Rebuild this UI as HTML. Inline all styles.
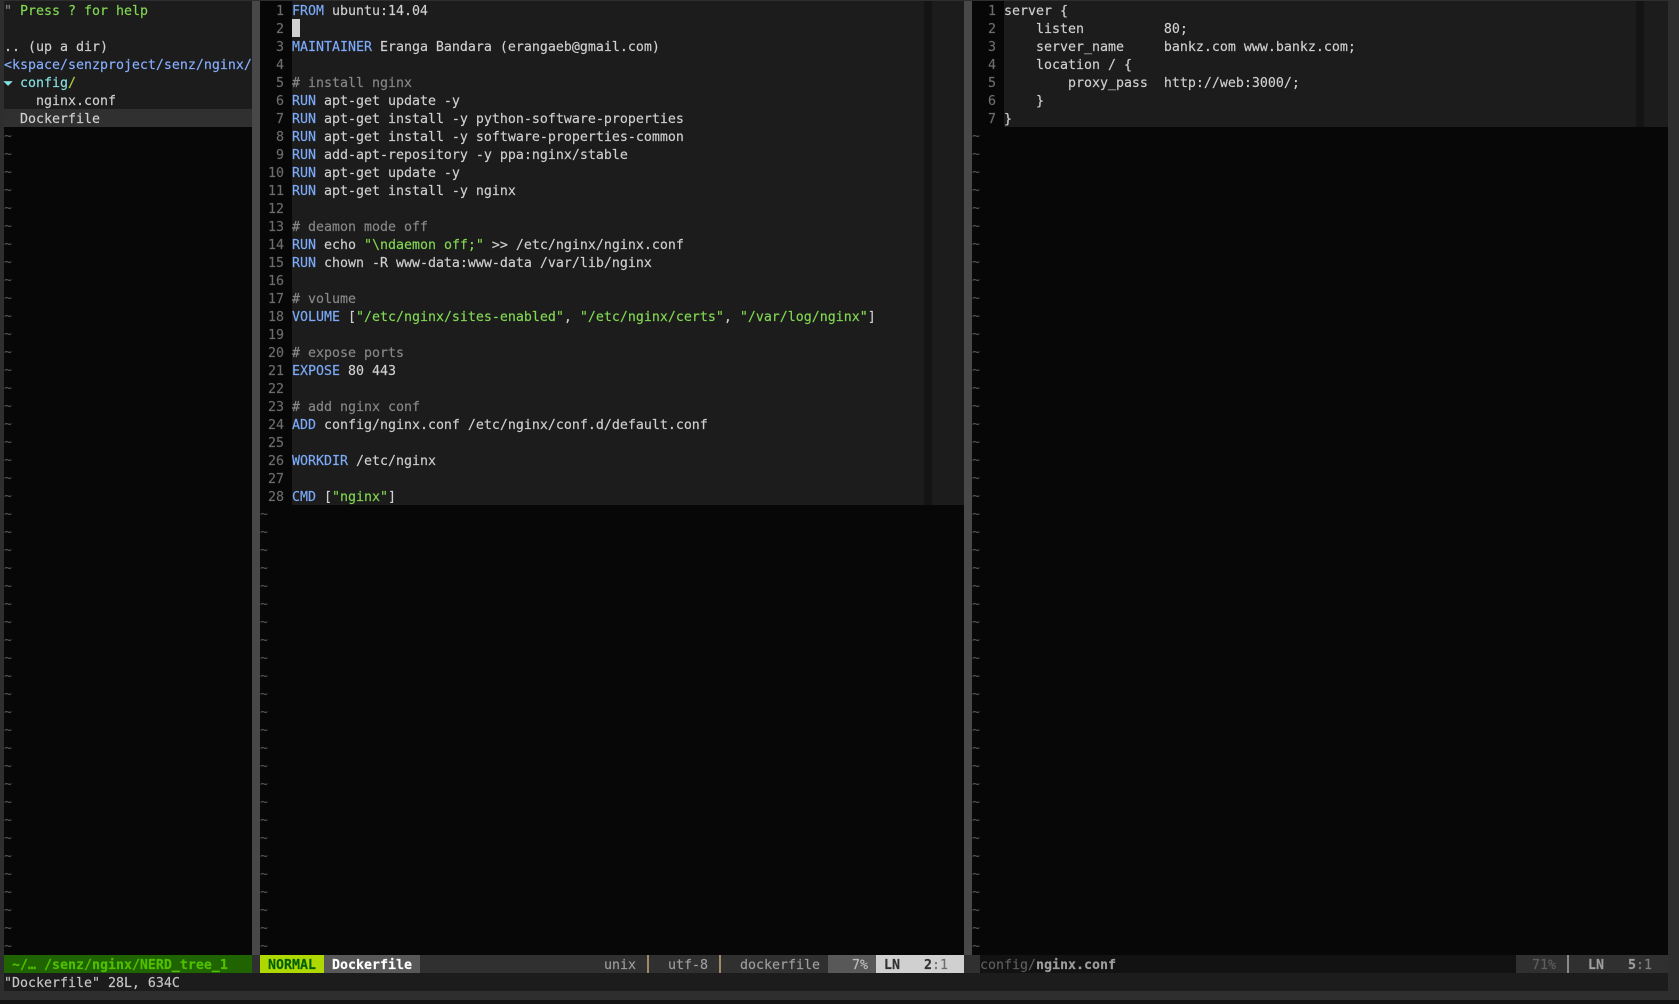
<!DOCTYPE html>
<html><head><meta charset="utf-8">
<style>
html,body{margin:0;padding:0;background:#2e2e2e;}
#s{position:relative;width:1679px;height:1004px;overflow:hidden;background:#2e2e2e;font-family:"DejaVu Sans Mono","Liberation Mono",monospace;font-size:13.29px;line-height:18px;color:#d0d0d0;-webkit-text-stroke:.15px;}
.b{position:absolute;}
pre{position:absolute;margin:0;font:inherit;line-height:18px;white-space:pre;transform:translateY(2px);}
pre.t{transform:translateY(1px);}
.k{color:#7dabfa;}.g{color:#82d850;}.c{color:#888;}.n{color:#6c6c6c;}.t{color:#50505a;}
.st{position:absolute;white-space:pre;top:957px;line-height:18px;}
strong{font-weight:bold;}
</style></head><body><div id="s">
<div class="b" style="left:4px;top:1px;width:248px;height:954px;background:#070707"></div>
<div class="b" style="left:4px;top:1px;width:248px;height:126px;background:#1c1c1c"></div>
<div class="b" style="left:4px;top:109px;width:248px;height:18px;background:#303030"></div>
<div class="b" style="left:252px;top:1px;width:8px;height:954px;background:#484848"></div>
<div class="b" style="left:260px;top:1px;width:704px;height:954px;background:#070707"></div>
<div class="b" style="left:292px;top:1px;width:672px;height:504px;background:#1c1c1c"></div>
<div class="b" style="left:924px;top:1px;width:8px;height:504px;background:#141414"></div>
<div class="b" style="left:964px;top:1px;width:8px;height:954px;background:#484848"></div>
<div class="b" style="left:972px;top:1px;width:696px;height:954px;background:#070707"></div>
<div class="b" style="left:1004px;top:1px;width:664px;height:126px;background:#1c1c1c"></div>
<div class="b" style="left:1636px;top:1px;width:8px;height:126px;background:#141414"></div>
<div class="b" style="left:292px;top:19px;width:8px;height:18px;background:#d0d0d0"></div>

<pre style="left:4px;top:1px"><span class="c">"</span> <span class="g">Press ? for help</span>

.. (up a dir)
<span style="color:#87afff">&lt;kspace/senzproject/senz/nginx/</span>
<span style="color:#87e0e0"><span style="display:inline-block;width:8px;transform:scale(1.7,.85)">▾</span> config</span><span style="color:#b0d040">/</span>
    nginx.conf
  Dockerfile</pre>
<pre class="t" style="left:4px;top:127px">~
~
~
~
~
~
~
~
~
~
~
~
~
~
~
~
~
~
~
~
~
~
~
~
~
~
~
~
~
~
~
~
~
~
~
~
~
~
~
~
~
~
~
~
~
~</pre>

<pre class="n" style="left:260px;top:1px">  1
  2
  3
  4
  5
  6
  7
  8
  9
 10
 11
 12
 13
 14
 15
 16
 17
 18
 19
 20
 21
 22
 23
 24
 25
 26
 27
 28</pre>
<pre style="left:292px;top:1px"><span class="k">FROM</span> ubuntu:14.04

<span class="k">MAINTAINER</span> Eranga Bandara (erangaeb@gmail.com)

<span class="c"># install nginx</span>
<span class="k">RUN</span> apt-get update -y
<span class="k">RUN</span> apt-get install -y python-software-properties
<span class="k">RUN</span> apt-get install -y software-properties-common
<span class="k">RUN</span> add-apt-repository -y ppa:nginx/stable
<span class="k">RUN</span> apt-get update -y
<span class="k">RUN</span> apt-get install -y nginx

<span class="c"># deamon mode off</span>
<span class="k">RUN</span> echo <span class="g">"\ndaemon off;"</span> &gt;&gt; /etc/nginx/nginx.conf
<span class="k">RUN</span> chown -R www-data:www-data /var/lib/nginx

<span class="c"># volume</span>
<span class="k">VOLUME</span> [<span class="g">"/etc/nginx/sites-enabled"</span>, <span class="g">"/etc/nginx/certs"</span>, <span class="g">"/var/log/nginx"</span>]

<span class="c"># expose ports</span>
<span class="k">EXPOSE</span> 80 443

<span class="c"># add nginx conf</span>
<span class="k">ADD</span> config/nginx.conf /etc/nginx/conf.d/default.conf

<span class="k">WORKDIR</span> /etc/nginx

<span class="k">CMD</span> [<span class="g">"nginx"</span>]</pre>
<pre class="t" style="left:260px;top:505px">~
~
~
~
~
~
~
~
~
~
~
~
~
~
~
~
~
~
~
~
~
~
~
~
~</pre>

<pre class="n" style="left:972px;top:1px">  1
  2
  3
  4
  5
  6
  7</pre>
<pre style="left:1004px;top:1px">server {
    listen          80;
    server_name     bankz.com www.bankz.com;
    location / {
        proxy_pass  http://web:3000/;
    }
}</pre>
<pre class="t" style="left:972px;top:127px">~
~
~
~
~
~
~
~
~
~
~
~
~
~
~
~
~
~
~
~
~
~
~
~
~
~
~
~
~
~
~
~
~
~
~
~
~
~
~
~
~
~
~
~
~
~</pre>

<div class="b" style="left:4px;top:955px;width:248px;height:18px;background:#1f6400"></div>
<div class="st" style="left:12px;color:#50c000;font-weight:bold">~/… /senz/nginx/NERD_tree_1</div>
<div class="b" style="left:252px;top:955px;width:8px;height:18px;background:#303030"></div>
<div class="b" style="left:260px;top:955px;width:64px;height:18px;background:#afd700"></div>
<div class="st" style="left:268px;color:#005f00;font-weight:bold">NORMAL</div>
<div class="b" style="left:324px;top:955px;width:96px;height:18px;background:#585858"></div>
<div class="st" style="left:332px;color:#fff;font-weight:bold">Dockerfile</div>
<div class="b" style="left:420px;top:955px;width:408px;height:18px;background:#303030"></div>
<div class="st" style="left:604px;color:#9e9e9e">unix</div>
<div class="b" style="left:647px;top:955px;width:2px;height:18px;background:#a08a68"></div>
<div class="st" style="left:668px;color:#9e9e9e">utf-8</div>
<div class="b" style="left:719px;top:955px;width:2px;height:18px;background:#a08a68"></div>
<div class="st" style="left:740px;color:#9e9e9e">dockerfile</div>
<div class="b" style="left:828px;top:955px;width:48px;height:18px;background:#585858"></div>
<div class="st" style="left:852px;color:#bcbcbc">7%</div>
<div class="b" style="left:876px;top:955px;width:88px;height:18px;background:#d0d0d0"></div>
<div class="st" style="left:884px;color:#303030;font-weight:bold">LN</div>
<div class="st" style="left:924px;color:#303030;font-weight:bold">2</div>
<div class="st" style="left:932px;color:#6c6c6c">:1</div>
<div class="b" style="left:964px;top:955px;width:16px;height:18px;background:#303030"></div>
<div class="b" style="left:980px;top:955px;width:536px;height:18px;background:#121212"></div>
<div class="st" style="left:980px;color:#5e5e5e">config/<strong style="color:#9e9e9e">nginx.conf</strong></div>
<div class="b" style="left:1516px;top:955px;width:152px;height:18px;background:#303030"></div>
<div class="st" style="left:1532px;color:#5e5e5e">71%</div>
<div class="b" style="left:1567px;top:955px;width:2px;height:19px;background:#8a8a8a"></div>
<div class="st" style="left:1588px;color:#9e9e9e;font-weight:bold">LN</div>
<div class="st" style="left:1628px;color:#9e9e9e;font-weight:bold">5</div>
<div class="st" style="left:1636px;color:#808080">:1</div>

<div class="b" style="left:4px;top:973px;width:1664px;height:18px;background:#1c1c1c"></div>
<pre style="left:4px;top:973px;color:#c6c6c6">"Dockerfile" 28L, 634C</pre>
<div class="b" style="left:0;top:1000px;width:1679px;height:4px;background:#121212"></div>
</div></body></html>
